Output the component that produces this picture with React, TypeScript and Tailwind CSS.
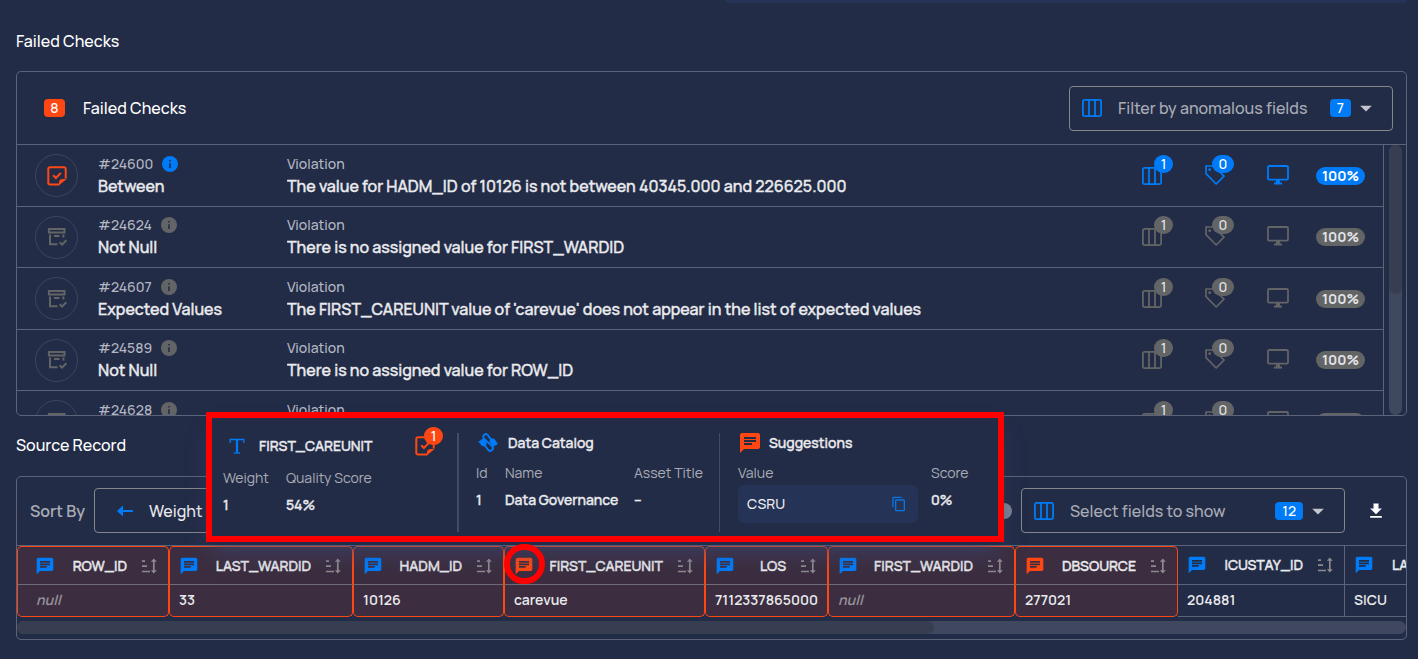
import React from "react";
import { MdChat, MdFileDownload, MdContentCopy, MdArrowDropDown } from "react-icons/md";

type IconProps = { className?: string };

function ColumnsIcon({ className = "" }: IconProps) {
  return (
    <svg viewBox="0 0 20 18" className={`h-[18px] w-5 shrink-0 ${className}`} fill="none" stroke="currentColor" strokeWidth="1.8" aria-hidden="true">
      <rect x="0.9" y="0.9" width="18.2" height="16.2" rx="1.5" />
      <path d="M7 1v16M13 1v16" />
    </svg>
  );
}

function StickerCheck({ className = "" }: IconProps) {
  return (
    <svg viewBox="0 0 20 20" className={`size-5 shrink-0 ${className}`} fill="none" stroke="currentColor" strokeWidth="2" aria-hidden="true">
      <path d="M12.5 18.6H3a1.7 1.7 0 0 1-1.7-1.7V3A1.7 1.7 0 0 1 3 1.3h14A1.7 1.7 0 0 1 18.7 3v9.4" />
      <path d="M12 19.3v-2.6a3.6 3.6 0 0 1 3.6-3.7h4z" fill="currentColor" stroke="none" />
      <path d="M6.2 9.3l2.7 2.7 5-5.1" />
    </svg>
  );
}

function ArchiveCheck({ className = "" }: IconProps) {
  return (
    <svg viewBox="0 0 20 20" className={`size-5 shrink-0 ${className}`} fill="none" stroke="currentColor" strokeWidth="2" aria-hidden="true">
      <path d="M1.9 1.9h15.6v3.6H1.9zM3 7.5v9.7h7.5M16.4 7.5v3M7 9h5.5M12.7 15.3l2.3 2.3 4.4-4.5" />
    </svg>
  );
}

function InfoIcon({ className = "" }: IconProps) {
  return (
    <svg viewBox="0 0 16 16" className={`size-4 shrink-0 ${className}`} aria-hidden="true">
      <circle cx="8" cy="8" r="8" fill="currentColor" />
      <path d="M7.2 4h1.6v1.6H7.2zM7.2 7.2h1.6V12H7.2z" fill="#232c47" />
    </svg>
  );
}

function TagIcon({ className = "" }: IconProps) {
  return (
    <svg viewBox="0 0 20 20" className={`size-5 shrink-0 ${className}`} fill="none" stroke="currentColor" strokeWidth="1.7" strokeLinejoin="round" aria-hidden="true">
      <path d="M1 1h7.5L19 11.2 11.2 19 1 8.6z" />
      <circle cx="4.7" cy="4.7" r="1.4" fill="currentColor" stroke="none" />
    </svg>
  );
}

function MonitorIcon({ className = "" }: IconProps) {
  return (
    <svg viewBox="0 0 22 20" className={`h-5 w-[22px] shrink-0 ${className}`} fill="none" stroke="currentColor" strokeWidth="1.8" aria-hidden="true">
      <rect x="1" y="1" width="20" height="13.6" rx="1.2" />
      <path d="M7 18.6h8" strokeWidth="2" />
      <path d="M9 14.5h4v4H9z" fill="currentColor" stroke="none" />
    </svg>
  );
}

function SortIcon() {
  return (
    <svg viewBox="0 0 16 16" className="size-4 shrink-0 text-[#8d8a8e]" fill="none" stroke="currentColor" strokeWidth="1.7" aria-hidden="true">
      <path d="M1 3.2h3M1 8.200h5M1 13.5h8M12.8 2.5v11" />
      <path d="M12.8 0.6l3 3.2h-6zM12.8 15.4l3-3.2h-6z" fill="currentColor" stroke="none" />
    </svg>
  );
}

function LetterIcon() {
  return (
    <svg viewBox="0 0 16 16" className="size-4 shrink-0 text-[#007bf7]" fill="none" stroke="currentColor" aria-hidden="true">
      <path d="M1.2 5V1.5h13.6V5" strokeWidth="1.3" />
      <path d="M8 1.5v13" strokeWidth="2.2" />
      <path d="M4.8 15h6.4" strokeWidth="1.3" />
    </svg>
  );
}

function PlugsIcon() {
  return (
    <svg viewBox="0 0 20 20" className="size-5 shrink-0 text-[#007bf7]" fill="none" stroke="currentColor" strokeWidth="1.9" strokeLinecap="round" aria-hidden="true">
      <path d="M6 11.2l4 5.500c2.200 2.800 6.400-.5 4.300-3.300L6 5.600C3.800 2.500 7.600-.4 9.800 2.200L14 7.800" />
      <path d="M2.300 7.200l3-2 3.500 4.700-.6 2.300-2 1.400-2.300-.5-2-2.700zM11.400 8.900l.5-2.100 2-1.500 2.300.4 2.300 3-.2 3.100-2.800 2z" fill="currentColor" stroke="none" />
      <path d="M1 9.300l1.200-.9M17.800 11.300l1.200-.9" strokeWidth="1.5" />
    </svg>
  );
}

function ArrowLeft() {
  return (
    <svg viewBox="0 0 16 12" className="h-3 w-4 shrink-0 text-[#007bf7]" fill="currentColor" aria-hidden="true">
      <path d="M0 6l6-5.500v4.500h10v2H6v4.500z" />
    </svg>
  );
}

type Check = { id: string; name: string; message: string; active?: boolean };

const checks: Check[] = [
  { id: "#24600", name: "Between", message: "The value for HADM_ID of 10126 is not between 40345.000 and 226625.000", active: true },
  { id: "#24624", name: "Not Null", message: "There is no assigned value for FIRST_WARDID" },
  { id: "#24607", name: "Expected Values", message: "The FIRST_CAREUNIT value of 'carevue' does not appear in the list of expected values" },
  { id: "#24589", name: "Not Null", message: "There is no assigned value for ROW_ID" },
  { id: "#24628", name: "Not Null", message: "There is no assigned value for LOS" },
];

const strong = "font-medium [-webkit-text-stroke:0.4px]";

function CheckRow({ check }: { check: Check }) {
  const tone = check.active ? "text-[#007bf7]" : "text-[#636466]";
  const fill = check.active ? "bg-[#007bf7] text-white" : "bg-[#636466] text-[#e2e3e6]";
  return (
    <li className="flex items-center border-b border-[#5d6479] px-[18px] odd:h-[62px] even:h-[61px]">
      <span className={`flex size-[43px] shrink-0 items-center justify-center rounded-full border border-[#3d4660] ${check.active ? "text-[#ff4713]" : "text-[#636466]"}`}>
        {check.active ? <StickerCheck /> : <ArchiveCheck />}
      </span>
      <div className="ml-5 w-[189px] shrink-0 pb-0.5">
        <div className="flex h-[22px] items-center gap-[9px] text-sm font-medium text-[#b4b8c3]">
          {check.id}
          <InfoIcon className={tone} />
        </div>
        <div className={`h-[22px] text-base leading-[22px] text-[#e9eaed] ${strong}`}>{check.name}</div>
      </div>
      <div className="min-w-0 flex-1 pb-0.5">
        <div className="h-[22px] text-sm leading-[22px] font-medium text-[#b4b8c3]">Violation</div>
        <div className={`h-[22px] truncate text-base leading-[22px] text-[#e9eaed] ${strong}`}>{check.message}</div>
      </div>
      <div className={`flex shrink-0 items-center ${tone}`}>
        <span className="relative mr-[43px]">
          <ColumnsIcon />
          <span className={`absolute -top-3 left-3 flex h-[18px] w-[19px] items-center justify-center rounded-full text-sm font-medium ${fill}`}>1</span>
        </span>
        <span className="relative mr-[42px] pb-0.5">
          <TagIcon />
          <span className={`absolute -top-2.5 left-[7px] flex h-[18px] w-[22px] items-center justify-center rounded-full text-sm font-medium ${fill}`}>0</span>
        </span>
        <span className="mr-[27px] pb-0.5"><MonitorIcon /></span>
        <span className={`flex h-[18px] w-[49px] items-center justify-center rounded-full text-sm font-bold ${fill}`}>100%</span>
      </div>
    </li>
  );
}

function FieldPicker({ label, count }: { label: string; count: number }) {
  return (
    <button type="button" aria-haspopup="listbox" className="flex h-[45px] w-[324px] shrink-0 items-center rounded border border-[#85868a] px-3 text-left">
      <ColumnsIcon className="text-[#007bf7]" />
      <span className="ml-4 flex-1 text-base font-medium text-[#a9acb6]">{label}</span>
      <span className="flex h-[18px] items-center rounded bg-[#007bf7] px-[7px] text-sm font-medium text-white">{count}</span>
      <MdArrowDropDown className="ml-px size-7 text-[#c3c5ca]" aria-hidden="true" />
    </button>
  );
}

type Column = { name: string; value: string | null; width: string; failed?: boolean; suggested?: boolean; circled?: boolean };

const columns: Column[] = [
  { name: "ROW_ID", value: null, width: "w-[152px]", failed: true },
  { name: "LAST_WARDID", value: "33", width: "w-[184px]", failed: true },
  { name: "HADM_ID", value: "10126", width: "w-[151px]", failed: true },
  { name: "FIRST_CAREUNIT", value: "carevue", width: "w-[201px]", failed: true, suggested: true, circled: true },
  { name: "LOS", value: "7112337865000", width: "w-[123px]", failed: true },
  { name: "FIRST_WARDID", value: null, width: "w-[187px]", failed: true },
  { name: "DBSOURCE", value: "277021", width: "w-[163px]", failed: true, suggested: true },
  { name: "ICUSTAY_ID", value: "204881", width: "w-[167px]" },
  { name: "LAST_CAREUNIT", value: "SICU", width: "w-[199px]" },
];

function RecordTable() {
  return (
    <table className="w-[1527px] table-fixed border-separate border-spacing-0 text-left text-sm">
      <thead>
        <tr>
          {columns.map((c) => (
            <th
              key={c.name}
              scope="col"
              className={`h-[39px] p-0 text-[#e9eaed] ${strong} ${c.width} ${c.failed ? "rounded-t-[5px] border border-[#ff4713] border-b-[#6f6a78] bg-[#3c2e40]" : "border-r border-b border-[#5d6479]"}`}
            >
              <div className="flex items-center pr-[11px] pl-[9px]">
                <span className={`relative shrink-0 ${c.suggested ? "text-[#ff4713]" : "text-[#007bf7]"} ${c.name === "ROW_ID" ? "ml-2" : ""}`}>
                  <MdChat className="size-5" aria-hidden="true" />
                  {c.circled && <span className="absolute -top-3 -left-2.5 z-20 h-10 w-[41px] rounded-full border-[6px] border-[#ff0000]" />}
                </span>
                <span className="mr-3.5 flex-1 text-right">{c.name}</span>
                <SortIcon />
              </div>
            </th>
          ))}
        </tr>
      </thead>
      <tbody>
        <tr>
          {columns.map((c) => (
            <td
              key={c.name}
              className={`h-8 p-0 pb-0.5 font-semibold whitespace-nowrap ${c.failed ? "rounded-b-[5px] border border-t-0 border-[#ff4713] bg-[#3c2e40]" : "border-r border-b border-[#5d6479]"} ${c.value === null ? "font-normal text-[#96939b] italic" : "text-[#e9eaed]"} ${c.name === "ROW_ID" ? "pl-[18px]" : "pl-[9px]"}`}
            >
              {c.value ?? "null"}
            </td>
          ))}
        </tr>
      </tbody>
    </table>
  );
}

function FieldPopover() {
  return (
    <aside aria-label="FIRST_CAREUNIT details" className="absolute -top-1 left-[190px] z-10 h-[130px] w-[798px] border-[6px] border-[#ff0000] bg-[#232c47] text-sm text-[#e9eaed] shadow-[0_6px_0_-3px_#232c47,0_16px_20px_-6px_rgba(58,76,128,0.55)]">
      <div className="flex h-full">
        <section className="w-[245px] pt-2 pl-[11px]">
          <div className="flex h-10 items-center">
            <span className="ml-1.5"><LetterIcon /></span>
            <h3 className={`ml-3.5 flex-1 ${strong}`}>FIRST_CAREUNIT</h3>
            <span className="relative mr-[22px] text-[#ff4713]">
              <StickerCheck />
              <span className="absolute -top-[9px] left-[9px] flex h-[18px] w-[19px] items-center justify-center rounded-full bg-[#ff4713] font-medium text-white">1</span>
            </span>
          </div>
          <dl className="mt-0.5 flex gap-[17px]">
            <div><dt className="h-[27px] text-[#a9acb6]">Weight</dt><dd className={strong}>1</dd></div>
            <div><dt className="h-[27px] text-[#a9acb6]">Quality Score</dt><dd className={strong}>54%</dd></div>
          </dl>
        </section>
        <section className="mt-[15px] mb-1 w-[262px] border-l-2 border-[#434b63] pl-[17px]">
          <div className="flex h-5 items-center gap-2.5">
            <span className="ml-0.5"><PlugsIcon /></span>
            <h3 className={strong}>Data Catalog</h3>
          </div>
          <table className="mt-2.5 w-full table-fixed text-left">
            <thead>
              <tr className="h-5 align-middle text-[#a9acb6]">
                <th className="w-[29px] p-0 font-normal">Id</th>
                <th className="w-[129px] p-0 font-normal">Name</th>
                <th className="p-0 font-normal whitespace-nowrap">Asset Title</th>
              </tr>
            </thead>
            <tbody>
              <tr className={`h-[34px] align-middle ${strong}`}>
                <td className="p-0">1</td>
                <td className="p-0 whitespace-nowrap">Data Governance</td>
                <td className="p-0">–</td>
              </tr>
            </tbody>
          </table>
        </section>
        <section className="mt-[15px] mb-1 flex-1 border-l border-[#434b63] pl-[18px]">
          <div className="flex h-5 items-center gap-[7px]">
            <MdChat className="size-6 text-[#ff4713]" aria-hidden="true" />
            <h3 className={strong}>Suggestions</h3>
          </div>
          <dl className="mt-2.5 flex gap-[13px]">
            <div>
              <dt className="h-[22px] text-[#a9acb6]">Value</dt>
              <dd className="flex h-[38px] w-[180px] items-center justify-between rounded-md bg-[#243356] pr-[11px] pl-[9px] font-medium">
                CSRU
                <button type="button" aria-label="Copy value" className="text-[#0a74e0]"><MdContentCopy className="size-4" /></button>
              </dd>
            </div>
            <div><dt className="h-[27px] text-[#a9acb6]">Score</dt><dd className={strong}>0%</dd></div>
          </dl>
        </section>
      </div>
    </aside>
  );
}

export default function App() {
  return (
    <main className="min-h-screen overflow-hidden bg-[#232c47] pr-[11px] pl-4 font-['Manrope','Inter',sans-serif] text-[#e9eaed]">
      <div className="ml-auto h-[3px] w-[49%] rounded-b-md bg-[#243356]" />
      <h2 className="mt-[26px] text-base leading-6 font-medium text-white">Failed Checks</h2>
      <section className="mt-[18px] flex h-[345px] flex-col overflow-hidden rounded-[5px] border border-[#5d6479]">
        <header className="flex h-[73px] shrink-0 items-center border-b border-[#5d6479] pr-[13px] pl-[27px]">
          <span className="flex h-[18px] w-[21px] items-center justify-center rounded bg-[#ff4713] text-sm font-medium text-white">8</span>
          <h3 className="ml-[18px] flex-1 text-base font-medium text-white">Failed Checks</h3>
          <FieldPicker label="Filter by anomalous fields" count={7} />
        </header>
        <div className="flex min-h-0 flex-1">
          <ul className="min-w-0 flex-1 overflow-hidden border-r border-[#5d6479]">
            {checks.map((check) => <CheckRow key={check.id} check={check} />)}
          </ul>
          <div className="mr-1 ml-[5px] w-[13px] overflow-hidden rounded-full bg-[#404860]">
            <div className="h-[149px] rounded-b-full bg-[#383e51]" />
          </div>
        </div>
      </section>
      <div className="relative pt-[17px]">
        <h2 className="text-base leading-6 font-medium text-white">Source Record</h2>
        <section className="mt-[19px] overflow-hidden rounded-[5px] border border-[#5d6479]">
          <div className="flex items-center border-b border-[#5d6479] pt-[11px] pr-5 pb-3 pl-[13px]">
            <span className="w-16 shrink-0 text-base font-semibold text-[#a9acb6]">Sort By</span>
            <button type="button" className="flex h-[45px] w-[324px] items-center rounded border border-[#85868a] pl-[22px] text-base font-medium">
              <ArrowLeft />
              <span className="ml-4">Weight</span>
            </button>
            <span className="mr-[9px] ml-auto size-4 rounded-full bg-[#7b8192]" />
            <FieldPicker label="Select fields to show" count={12} />
            <button type="button" aria-label="Download" className="ml-[21px] text-white"><MdFileDownload className="size-5" /></button>
          </div>
          <RecordTable />
          <div className="mt-1 mb-[5px] h-[13px] overflow-hidden rounded-full bg-[#404860]">
            <div className="h-full w-[66%] rounded-r-full bg-[#383e51]" />
          </div>
        </section>
        <FieldPopover />
      </div>
    </main>
  );
}
